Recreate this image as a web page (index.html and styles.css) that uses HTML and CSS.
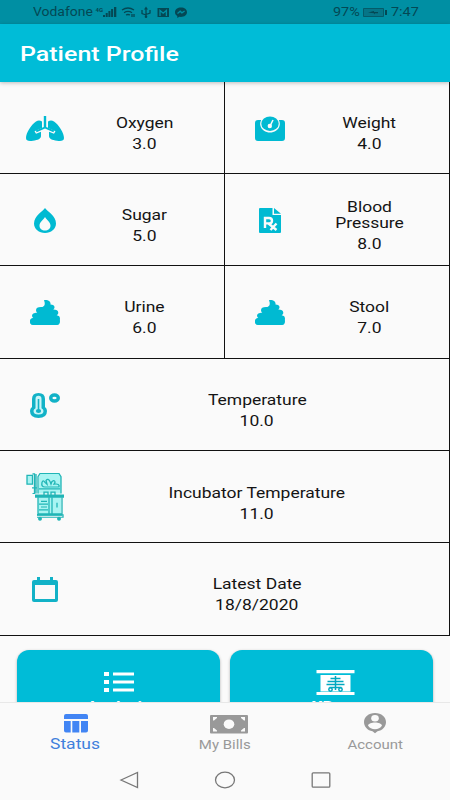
FILE: index.html
```html
<!DOCTYPE html>
<html lang="en">
<head>
<meta charset="utf-8">
<title>Patient Profile</title>
<link rel="stylesheet" href="styles.css">
</head>
<body>
<div class="screen">
  <div class="statusbar">
    <span class="wide carrier">Vodafone</span>
    <svg class="signals" width="94" height="24" viewBox="94 0 94 24">
      <text x="95.500" y="12" class="fourg" textLength="7.500" lengthAdjust="spacingAndGlyphs">4G</text>
      <path d="M103 15h2v2h-2zM105.700 13h2v4h-2zM108.400 11h2v6h-2zM111.100 9h2v8h-2zM114 7h2.300v10h-2.300z"/>
      <path class="line" d="M122 10q6-4 12 0M124 12.700q4-2.500 8 0M126 15q2-1 4 0M132 14v3M134 14v3"/>
      <path class="line" d="M146 8v9M142 10v3.500l4 1.500M150 10v3l-4 1.500"/><path d="M144 9.500l2-3 2 3z"/><circle cx="146" cy="16.700" r="1.300"/>
      <path d="M157.500 8h11.500v9h-11.500z"/><path class="bolt" d="M160 16v-5.500l3.200 2.700 3.200-2.700V16"/>
      <path d="M181 7.500c-3.500 0-6 2-6 4.700 0 1.700.8 3 2.300 3.800V18l2-1.200c4.500.6 7.700-1.600 7.700-4.600 0-2.700-2.500-4.700-6-4.700z"/><path class="bolt" d="M177.500 13.500l2.700-2.300 1.700 1.600 2.700-1.800"/>
    </svg>
    <span class="wide percent">97%</span>
    <svg class="battery" width="26" height="24" viewBox="362 0 26 24"><path class="cell" d="M363.500 8.500h20v8h-20z"/><path d="M385 10h2v5h-2zM368 12.500l6-1.500v1h4v1.200h-3l-1 1.300v-1.300z"/></svg>
    <span class="wide clock">7:47</span>
  </div>
  <header class="appbar"><h1 class="wide">Patient Profile</h1></header>

  <main class="content">
    <section class="grid">
      <div class="tile">
        <svg class="icon" viewBox="0 0 60 40"><path d="M28.800 6h2.400v11l8 3.500-.8 1.700-8.400-3.700-8.400 3.700-.8-1.700 8-3.500z"/><path d="M27 11.500q-3-2-6 0C16 15 11 23 11 28c0 3 3 3.300 7 2.700 5-.8 8-1.700 8-5v-4l-5 2-1.500-2.500L27 18zM33 11.500q3-2 6 0c5 3.500 10 11.500 10 16.500 0 3-3 3.300-7 2.700-5-.8-8-1.700-8-5v-4l5 2 1.500-2.500L33 18z"/></svg>
        <div class="text"><span class="wide label">Oxygen</span><span class="wide value">3.0</span></div>
      </div>
      <div class="tile">
        <svg class="icon" viewBox="0 0 60 40"><path d="M18 10h3.200c-1 2-1.400 4-.7 6 1.200 4 5 6.500 9.500 6.500s8.300-2.500 9.500-6.500c.7-2 .3-4-.7-6H42q3 0 3 3v15q0 3-3 3H18q-3 0-3-3V13q0-3 3-3z"/><ellipse cx="30" cy="13.700" rx="8.700" ry="7.300"/><path class="pointer" d="M33 10l-2.500 5"/><circle class="paper" cx="29.800" cy="16" r="2.200"/></svg>
        <div class="text"><span class="wide label">Weight</span><span class="wide value">4.0</span></div>
      </div>
      <div class="tile">
        <svg class="icon" viewBox="0 0 60 40"><path fill-rule="evenodd" d="M30 6c2 3 11 8 11 15.500 0 5.500-5 9.500-11 9.500s-11-4-11-9.500C19 14 28 9 30 6zM30 15c-2 3.500-5.500 5-5.500 8.700 0 3 2.500 4.800 5.500 4.800s5.500-1.800 5.500-4.800c0-3.700-3.500-5.200-5.500-8.700z"/></svg>
        <div class="text"><span class="wide label">Sugar</span><span class="wide value">5.0</span></div>
      </div>
      <div class="tile">
        <svg class="icon" viewBox="0 0 60 40"><path d="M20 6h12.500v7H41v17q0 1-1 1H20q-1 0-1-1V7q0-1 1-1zM34 6l7 5.800h-7z"/><path class="rx" d="M25 26v-10h4q3 0 3 2.700t-3 2.700h-4M28.500 21.500l8 6.500M36.500 21.500l-6 6.500"/></svg>
        <div class="text"><span class="label"><span class="wide">Blood</span><span class="wide">Pressure</span></span><span class="wide value">8.0</span></div>
      </div>
      <div class="tile">
        <svg class="icon" viewBox="0 0 60 40"><path d="M30 6c4 0 6 2 5.500 4.500 2.500 0 4 1 4 2.800 0 1-.5 1.800-1.200 2.300 3 0 5 1 5 3.200 0 1-.7 2-1.600 2.500 2.300.3 3.300 1.500 3.300 3.500 0 2.500-1.300 3.300-1.300 3.300Q45 31 41 31H19q-4 0-4-3.500 0-3 3.300-3.400-1.300-1-1.300-2.500 0-2.500 5.300-3-1.300-.7-1.300-2.300 0-3.300 5-3.300h1.500q3.500-1.200 1.500-7z"/><path d="M15 27.500q0-3.500 5-3.500h20q5 0 5 3.500T41 31H19q-4 0-4-3.500z"/></svg>
        <div class="text"><span class="wide label">Urine</span><span class="wide value">6.0</span></div>
      </div>
      <div class="tile">
        <svg class="icon" viewBox="0 0 60 40"><path d="M30 6c4 0 6 2 5.500 4.500 2.500 0 4 1 4 2.800 0 1-.5 1.800-1.200 2.300 3 0 5 1 5 3.200 0 1-.7 2-1.600 2.500 2.300.3 3.300 1.500 3.300 3.500 0 2.500-1.300 3.300-1.300 3.300Q45 31 41 31H19q-4 0-4-3.500 0-3 3.300-3.400-1.300-1-1.300-2.500 0-2.500 5.300-3-1.300-.7-1.300-2.300 0-3.300 5-3.300h1.500q3.500-1.200 1.500-7z"/><path d="M15 27.500q0-3.500 5-3.500h20q5 0 5 3.500T41 31H19q-4 0-4-3.500z"/></svg>
        <div class="text"><span class="wide label">Stool</span><span class="wide value">7.0</span></div>
      </div>
      <div class="tile full">
        <svg class="icon thermo" viewBox="0 0 60 40"><path d="M17 12q0-6 6.500-6t6.500 6v8q2 1.500 2 4 0 7-8.500 7T15 24q0-2.500 2-4z"/><path class="tube" d="M20.500 21.300V12q0-3.300 3-3.300t3 3.300v9.300q2 1 2 2.700 0 3.500-5 3.500t-5-3.500q0-1.700 2-2.700z"/><path class="mercury" d="M23.500 12v11"/><ellipse cx="23.500" cy="24" rx="2.600" ry="2"/><ellipse class="degree" cx="39.500" cy="11" rx="3.800" ry="3"/></svg>
        <div class="text"><span class="wide label">Temperature</span><span class="wide value">10.0</span></div>
      </div>
      <div class="tile full">
        <svg class="icon incubator" viewBox="0 -0.8 60 64.5" preserveAspectRatio="none"><path class="glass" d="M24 14l2-4h18l2 4v18H23zM12 13h6v9h-6zM23 35h23v19H23z"/><path class="frame" d="M23 32V14l2-3.500h19l2 3.500v18M12 12.500h5.500v9.500H12zM17.500 11h2v21h-2M21 11v21M17 26h5M20 34.500h28M23 36v18h24V36M34 36v18M37 36v18M24 43.500h9M24 49.500h9M26 40.500h6M26 46.500h6M24 27h21M29 30.500h4v4h-4zM36 30.500h4v4h-4zM42 42v5M22 55h26v2.500H22M25 58v3M44 58v3"/><path class="baby" d="M27 20q1-3 3 0l2 2-1-4q2-3 4 1l1 3 1-3q3-2 3 1l-1 2q6-1 5 3h-14q-4 0-3-5"/><path d="M20 33h29v3.500H20zM22 54h25v2H22z"/><circle cx="25" cy="59" r="2"/><circle cx="44" cy="59" r="2"/></svg>
        <div class="text down"><span class="wide label">Incubator Temperature</span><span class="wide value">11.0</span></div>
      </div>
      <div class="tile full">
        <svg class="icon date" viewBox="0 0 60 40"><path fill-rule="evenodd" d="M19 9h22q2 0 2 2v18q0 2-2 2H19q-2 0-2-2V11q0-2 2-2zM20 14v14h20V14z"/><path d="M22 6h3v4h-3zM35 6h3v4h-3z"/></svg>
        <div class="text"><span class="wide label">Latest Date</span><span class="wide value">18/8/2020</span></div>
      </div>
    </section>
    <section class="actions">
      <div class="card">
        <svg width="40" height="30" viewBox="0 0 40 30"><path d="M5 5h5v4H5zM14 5.500h21v3H14zM5 13h5v4H5zM14 13.500h21v3H14zM5 21h5v4H5zM14 21.500h21v3H14z"/></svg>
        <span class="wide">Analysis</span>
      </div>
      <div class="card">
        <svg width="48" height="30" viewBox="-7.500 0 48 30"><path d="M1 3h38v3.300H1zM5 8h30v16.500H5zM1 25h38v3H1z"/><path class="ribs" d="M20 9v14M15 11.500h10M12 14.500h16M11 17.500h18M14 20.500h12"/><circle class="ribs" cx="15" cy="22.500" r="1.700"/><circle class="ribs" cx="25" cy="22.500" r="1.700"/></svg>
        <span class="wide">XRay</span>
      </div>
    </section>
  </main>

  <nav class="tabs">
    <a class="tab active">
      <svg width="40" height="24" viewBox="-1 0 40 24"><path d="M10 2h20q2 0 2 2v3H8V4q0-2 2-2zM8 9h6.700v11.500H10q-2 0-2-2zM16.300 9h7v11.500h-7zM25 9h7v9.500q0 2-2 2h-5z"/></svg>
      <span class="wide">Status</span>
    </a>
    <a class="tab">
      <svg width="48" height="24" viewBox="-8 0 48 24"><path d="M2 3h36q1 0 1 1v16.500q0 1-1 1H2q-1 0-1-1V4q0-1 1-1z"/><ellipse class="paper" cx="20" cy="12.200" rx="5.300" ry="4.800"/><path class="paper" d="M4 5h4v1l-3 2.500H4zM36 5h-4v1l3 2.500h1zM4 19.500h4v-1L5 16H4zM36 19.500h-4v-1l3-2.500h1z"/></svg>
      <span class="wide">My Bills</span>
    </a>
    <a class="tab">
      <svg width="40" height="24" viewBox="0 0 40 24"><path d="M20 1C13.500 1 9 5 9 10c0 4.500 3.500 8.500 8.500 9.300L20 21.300l2.500-2C27.500 18.500 31 14.500 31 10c0-5-4.500-9-11-9z"/><ellipse class="paper" cx="20" cy="6.200" rx="3.800" ry="3.200"/><path class="paper" d="M13 13.500c1-4 13-4 14 0-1.500 2.500-4 3.800-7 3.800s-5.500-1.300-7-3.800z"/></svg>
      <span class="wide">Account</span>
    </a>
  </nav>
  <div class="sysnav">
    <svg width="20" height="20" viewBox="0 0 20 20"><path d="M2 10L18.500 2.500v15z"/></svg>
    <svg width="22" height="20" viewBox="0 0 22 20"><ellipse cx="11" cy="10" rx="9.500" ry="7.800"/></svg>
    <svg width="20" height="20" viewBox="0 0 20 20"><rect x="1.200" y="2.800" width="17.600" height="14.400" rx="1"/></svg>
  </div>
</div>
</body>
</html>
```
FILE: styles.css
```css
* { box-sizing: border-box; }
body { margin: 0; font-family: Roboto, "Liberation Sans", sans-serif; color: #141414; }
svg { display: block; flex: none; }
.screen { width: 450px; height: 800px; background: #fafafa; display: flex; flex-direction: column; overflow: hidden; }
.wide { display: block; transform: scaleX(1.2); white-space: nowrap; }

.statusbar { flex: none; height: 24px; background: #008fa3; display: flex; align-items: center; color: #044854; fill: #044854; font-size: 12px; line-height: 26px; }
.carrier, .percent, .clock { transform-origin: left center; }
.carrier { width: 61px; margin-left: 33px; transform: scaleX(1.16); }
.percent { width: 29px; margin-left: 145px; }
.battery { margin-right: 3px; }
.fourg { font-size: 6px; font-weight: 700; }
.signals .line { fill: none; stroke: #044854; stroke-width: 1.3; }
.signals .bolt { fill: none; stroke: #008fa3; stroke-width: 1.3; }
.battery .cell { fill: #067587; stroke: #045b69; stroke-width: 1; }

.appbar { flex: none; height: 58px; background: #00bcd7; display: flex; align-items: center; padding: 2px 0 0 20px; position: relative; box-shadow: 0 1px 4px rgba(0, 0, 0, .25); }
.appbar h1 { margin: 0; font-size: 20px; font-weight: 500; line-height: 24px; color: #fff; transform: scaleX(1.25); transform-origin: left center; }

.content { flex: none; height: 620px; overflow: hidden; }
.grid { display: grid; grid-template-columns: 225px 225px; grid-template-rows: 92px 92px 93px 92px 92px 93px; }
.tile { display: flex; border-right: 1px solid #111; border-bottom: 1px solid #111; padding-right: 25px; }
.full { grid-column: span 2; }
.icon { width: 60px; height: 40px; margin: 28px 15px 0; fill: #00bad2; }
.thermo, .date { fill: #12b2c7; }
.text { flex: 1; display: flex; flex-direction: column; align-items: center; justify-content: center; gap: 5px; padding-top: 11px; font-size: 15px; line-height: 16px; text-align: center; }
.text .wide { transform: scaleX(1.165); }
.down { padding-top: 13px; }
.paper { fill: #fafafa; }
.pointer { stroke: #fafafa; stroke-width: 1.6; }
.rx { fill: none; stroke: #fafafa; stroke-width: 2.4; }
.tube { fill: #c9f5f8; }
.mercury { stroke: #12b2c7; stroke-width: 1.6; }
.degree { fill: none; stroke: #12b2c7; stroke-width: 3.4; }
.incubator { height: 60px; margin-top: 12px; fill: #20b5b6; }
.incubator .glass { fill: #a9f4f2; }
.incubator .frame, .incubator .baby { fill: none; stroke: #20b5b6; stroke-width: 1.3; }

.actions { display: flex; gap: 10px; padding: 14px 17px 0; }
.card { flex: 1; height: 90px; background: #00bcd7; border-radius: 12px; box-shadow: 0 1px 3px rgba(0, 0, 0, .3); display: flex; flex-direction: column; align-items: center; padding-top: 17px; fill: #fff; color: #fff; font-size: 14px; font-weight: 700; line-height: 20px; }
.ribs { fill: none; stroke: #00a8c0; stroke-width: 1.5; }

.tabs { flex: none; height: 57px; border-top: 1px solid #e8e8e8; background: #fafafa; display: flex; }
.tab { flex: 1; display: flex; flex-direction: column; align-items: center; padding-top: 9px; fill: #999; color: #999; font-size: 12px; line-height: 19px; }
.tab .wide { transform: scaleX(1.25); }
.active { color: #4080dc; fill: #4285f4; font-size: 14px; line-height: 17px; }
.sysnav { flex: 1; display: flex; justify-content: center; align-items: center; gap: 75px; fill: none; stroke: #777; stroke-width: 1.3; }
```
